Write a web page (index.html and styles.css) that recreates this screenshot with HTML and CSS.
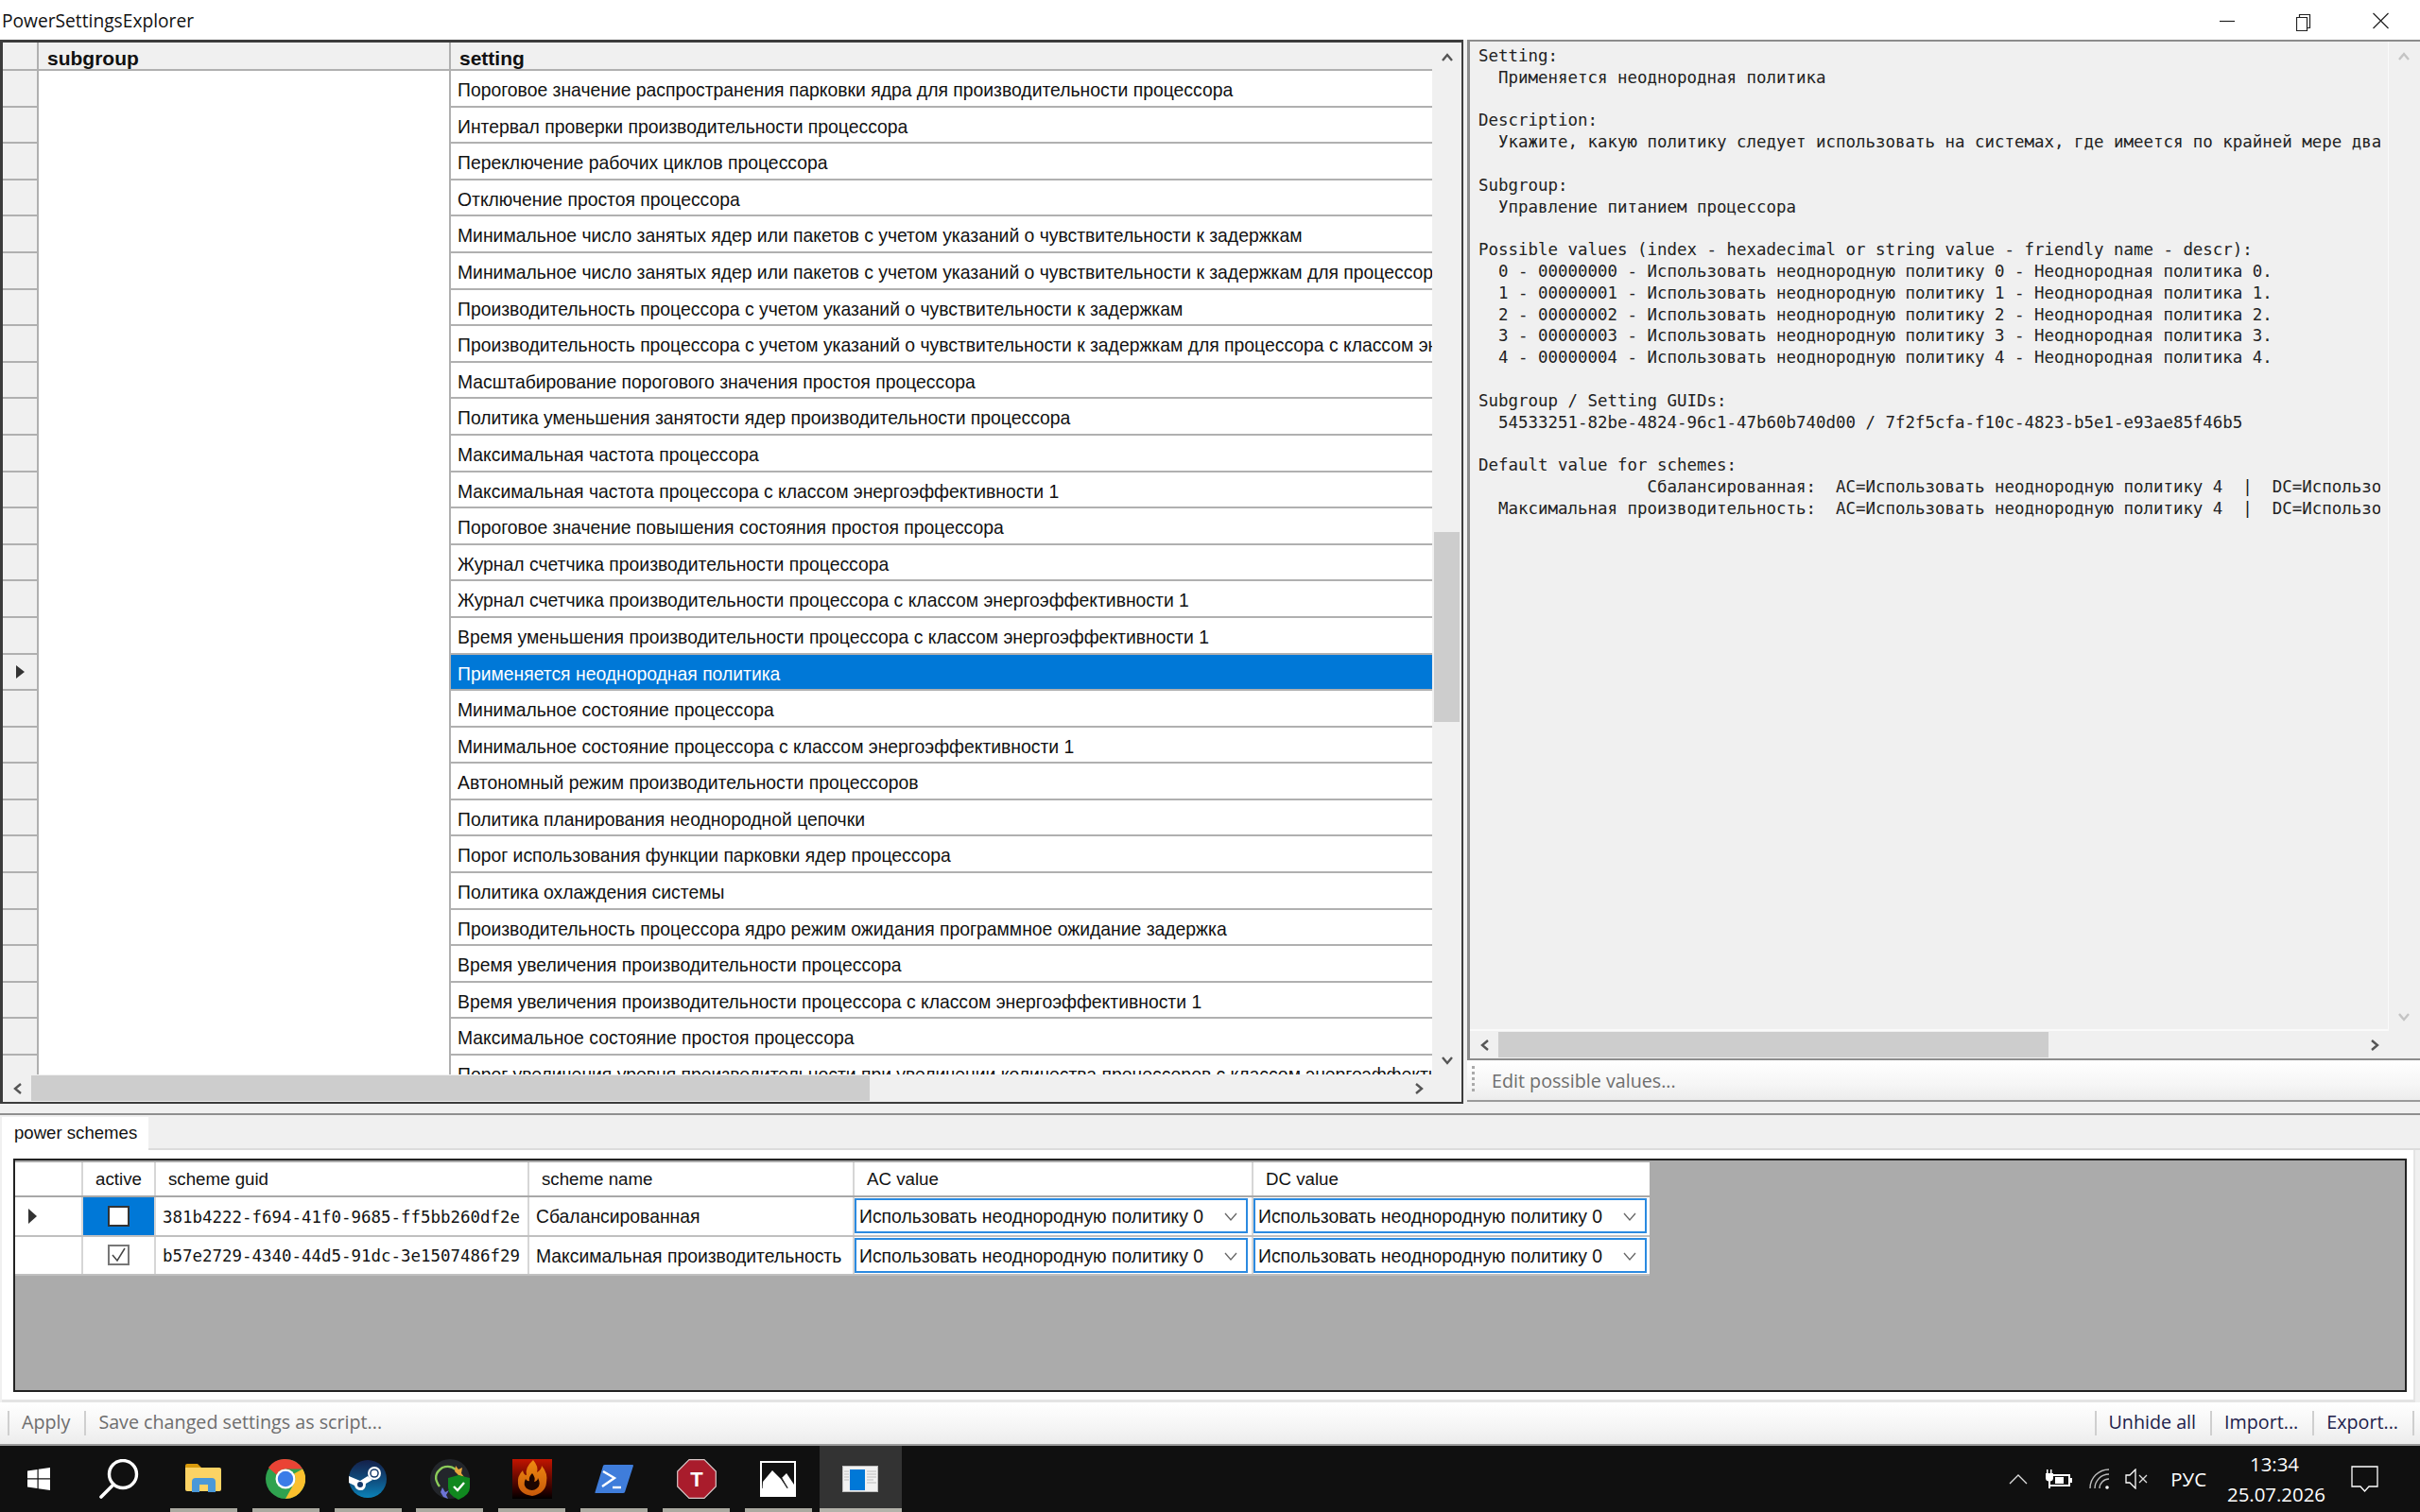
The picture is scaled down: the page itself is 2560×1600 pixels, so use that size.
FILE: index.html
```html
<!DOCTYPE html>
<html lang="en">
<head>
    <meta charset="UTF-8">
    <title>PowerSettingsExplorer</title>
    <link rel="stylesheet" href="styles.css">
</head>
<body>
    <header class="titlebar">
        <div class="app-title">PowerSettingsExplorer</div>
        <div class="window-controls">
            <svg class="win-btn" width="81" height="30" viewBox="0 0 81 30"><path d="M0 15.5H16"/></svg>
            <svg class="win-btn" width="81" height="30" viewBox="0 0 81 30"><path d="M0.5 11.5H11.5V25.5H0.5ZM3.5 11V8.5H14.5V22.5H12"/></svg>
            <svg class="win-btn" width="17" height="30" viewBox="0 0 17 30"><path d="M0.5 7 16.5 23M16.5 7 0.5 23"/></svg>
        </div>
    </header>

    <main class="top-panes">
        <section class="settings-grid">
            <div class="settings-body">
                <div class="settings-table">
                    <div class="row head-row">
                        <div class="row-head"></div>
                        <div class="cell-subgroup">subgroup</div>
                        <div class="cell-setting">setting</div>
                    </div>
                    <div class="row"><div class="row-head"></div><div class="cell-subgroup"></div><div class="cell-setting">Пороговое значение распространения парковки ядра для производительности процессора</div></div>
                    <div class="row"><div class="row-head"></div><div class="cell-subgroup"></div><div class="cell-setting">Интервал проверки производительности процессора</div></div>
                    <div class="row"><div class="row-head"></div><div class="cell-subgroup"></div><div class="cell-setting">Переключение рабочих циклов процессора</div></div>
                    <div class="row"><div class="row-head"></div><div class="cell-subgroup"></div><div class="cell-setting">Отключение простоя процессора</div></div>
                    <div class="row"><div class="row-head"></div><div class="cell-subgroup"></div><div class="cell-setting">Минимальное число занятых ядер или пакетов с учетом указаний о чувствительности к задержкам</div></div>
                    <div class="row"><div class="row-head"></div><div class="cell-subgroup"></div><div class="cell-setting">Минимальное число занятых ядер или пакетов с учетом указаний о чувствительности к задержкам для процессора с классом энергоэффективности 1</div></div>
                    <div class="row"><div class="row-head"></div><div class="cell-subgroup"></div><div class="cell-setting">Производительность процессора с учетом указаний о чувствительности к задержкам</div></div>
                    <div class="row"><div class="row-head"></div><div class="cell-subgroup"></div><div class="cell-setting">Производительность процессора с учетом указаний о чувствительности к задержкам для процессора с классом энергоэффективности 1</div></div>
                    <div class="row"><div class="row-head"></div><div class="cell-subgroup"></div><div class="cell-setting">Масштабирование порогового значения простоя процессора</div></div>
                    <div class="row"><div class="row-head"></div><div class="cell-subgroup"></div><div class="cell-setting">Политика уменьшения занятости ядер производительности процессора</div></div>
                    <div class="row"><div class="row-head"></div><div class="cell-subgroup"></div><div class="cell-setting">Максимальная частота процессора</div></div>
                    <div class="row"><div class="row-head"></div><div class="cell-subgroup"></div><div class="cell-setting">Максимальная частота процессора с классом энергоэффективности 1</div></div>
                    <div class="row"><div class="row-head"></div><div class="cell-subgroup"></div><div class="cell-setting">Пороговое значение повышения состояния простоя процессора</div></div>
                    <div class="row"><div class="row-head"></div><div class="cell-subgroup"></div><div class="cell-setting">Журнал счетчика производительности процессора</div></div>
                    <div class="row"><div class="row-head"></div><div class="cell-subgroup"></div><div class="cell-setting">Журнал счетчика производительности процессора с классом энергоэффективности 1</div></div>
                    <div class="row"><div class="row-head"></div><div class="cell-subgroup"></div><div class="cell-setting">Время уменьшения производительности процессора с классом энергоэффективности 1</div></div>
                    <div class="row selected"><div class="row-head"><svg width="9" height="14" viewBox="0 0 9 14"><path d="M0 0 9 7 0 14Z" fill="#333"/></svg></div><div class="cell-subgroup"></div><div class="cell-setting">Применяется неоднородная политика</div></div>
                    <div class="row"><div class="row-head"></div><div class="cell-subgroup"></div><div class="cell-setting">Минимальное состояние процессора</div></div>
                    <div class="row"><div class="row-head"></div><div class="cell-subgroup"></div><div class="cell-setting">Минимальное состояние процессора с классом энергоэффективности 1</div></div>
                    <div class="row"><div class="row-head"></div><div class="cell-subgroup"></div><div class="cell-setting">Автономный режим производительности процессоров</div></div>
                    <div class="row"><div class="row-head"></div><div class="cell-subgroup"></div><div class="cell-setting">Политика планирования неоднородной цепочки</div></div>
                    <div class="row"><div class="row-head"></div><div class="cell-subgroup"></div><div class="cell-setting">Порог использования функции парковки ядер процессора</div></div>
                    <div class="row"><div class="row-head"></div><div class="cell-subgroup"></div><div class="cell-setting">Политика охлаждения системы</div></div>
                    <div class="row"><div class="row-head"></div><div class="cell-subgroup"></div><div class="cell-setting">Производительность процессора ядро режим ожидания программное ожидание задержка</div></div>
                    <div class="row"><div class="row-head"></div><div class="cell-subgroup"></div><div class="cell-setting">Время увеличения производительности процессора</div></div>
                    <div class="row"><div class="row-head"></div><div class="cell-subgroup"></div><div class="cell-setting">Время увеличения производительности процессора с классом энергоэффективности 1</div></div>
                    <div class="row"><div class="row-head"></div><div class="cell-subgroup"></div><div class="cell-setting">Максимальное состояние простоя процессора</div></div>
                    <div class="row"><div class="row-head"></div><div class="cell-subgroup"></div><div class="cell-setting">Порог увеличения уровня производительности при увеличении количества процессоров с классом энергоэффективности 1</div></div>
                </div>
                <div class="vscroll">
                    <div class="scroll-btn"><svg class="chev" width="12" height="9" viewBox="0 0 12 9"><path d="M1 8 6 2 11 8"/></svg></div>
                    <div class="vthumb"></div>
                    <div class="scroll-fill"></div>
                    <div class="scroll-btn"><svg class="chev" width="12" height="9" viewBox="0 0 12 9"><path d="M1 1 6 7 11 1"/></svg></div>
                </div>
            </div>
            <div class="hscroll">
                <div class="scroll-btn"><svg class="chev" width="9" height="12" viewBox="0 0 9 12"><path d="M8 1 2 6 8 11"/></svg></div>
                <div class="hthumb left-thumb"></div>
                <div class="scroll-fill"></div>
                <div class="scroll-btn"><svg class="chev" width="9" height="12" viewBox="0 0 9 12"><path d="M1 1 7 6 1 11"/></svg></div>
            </div>
        </section>

        <section class="details">
            <div class="details-box">
                <div class="details-body">
                    <div class="details-pad">
<pre class="details-text">Setting:
  Применяется неоднородная политика

Description:
  Укажите, какую политику следует использовать на системах, где имеется по крайней мере два

Subgroup:
  Управление питанием процессора

Possible values (index - hexadecimal or string value - friendly name - descr):
  0 - 00000000 - Использовать неоднородную политику 0 - Неоднородная политика 0.
  1 - 00000001 - Использовать неоднородную политику 1 - Неоднородная политика 1.
  2 - 00000002 - Использовать неоднородную политику 2 - Неоднородная политика 2.
  3 - 00000003 - Использовать неоднородную политику 3 - Неоднородная политика 3.
  4 - 00000004 - Использовать неоднородную политику 4 - Неоднородная политика 4.

Subgroup / Setting GUIDs:
  54533251-82be-4824-96c1-47b60b740d00 / 7f2f5cfa-f10c-4823-b5e1-e93ae85f46b5

Default value for schemes:
                 Сбалансированная:  AC=Использовать неоднородную политику 4  |  DC=Использовать неоднородную политику 4
  Максимальная производительность:  AC=Использовать неоднородную политику 4  |  DC=Использовать неоднородную политику 4</pre>
                    </div>
                    <div class="vscroll faded">
                        <div class="scroll-btn"><svg class="chev" width="12" height="9" viewBox="0 0 12 9"><path d="M1 8 6 2 11 8"/></svg></div>
                        <div class="scroll-fill"></div>
                        <div class="scroll-btn"><svg class="chev" width="12" height="9" viewBox="0 0 12 9"><path d="M1 1 6 7 11 1"/></svg></div>
                    </div>
                </div>
                <div class="hscroll details-scroll">
                    <div class="scroll-btn"><svg class="chev" width="9" height="12" viewBox="0 0 9 12"><path d="M8 1 2 6 8 11"/></svg></div>
                    <div class="hthumb right-thumb"></div>
                    <div class="scroll-fill"></div>
                    <div class="scroll-btn"><svg class="chev" width="9" height="12" viewBox="0 0 9 12"><path d="M1 1 7 6 1 11"/></svg></div>
                </div>
            </div>
            <div class="edit-strip">
                <div class="grip"></div>
                <div class="strip-text disabled">Edit possible values...</div>
            </div>
        </section>
    </main>

    <div class="splitter"></div>

    <section class="schemes">
        <div class="tabs">
            <div class="tab">power schemes</div>
        </div>
        <div class="tab-page">
            <div class="schemes-grid">
                <div class="schemes-table">
                    <div class="s-row s-head">
                        <div class="s-rowhead"></div>
                        <div class="s-active">active</div>
                        <div class="s-guid head-pad">scheme guid</div>
                        <div class="s-name head-pad">scheme name</div>
                        <div class="s-value head-pad">AC value</div>
                        <div class="s-value head-pad">DC value</div>
                    </div>
                    <div class="s-row">
                        <div class="s-rowhead"><svg width="9" height="16" viewBox="0 0 9 16"><path d="M0 0 9 8 0 16Z" fill="#333"/></svg></div>
                        <div class="s-active current"><div class="check"></div></div>
                        <div class="s-guid">381b4222-f694-41f0-9685-ff5bb260df2e</div>
                        <div class="s-name">Сбалансированная</div>
                        <div class="s-value"><div class="combo"><span>Использовать неоднородную политику 0</span><svg width="14" height="9" viewBox="0 0 14 9"><path d="M1 1 7 8 13 1"/></svg></div></div>
                        <div class="s-value"><div class="combo"><span>Использовать неоднородную политику 0</span><svg width="14" height="9" viewBox="0 0 14 9"><path d="M1 1 7 8 13 1"/></svg></div></div>
                    </div>
                    <div class="s-row">
                        <div class="s-rowhead"></div>
                        <div class="s-active"><div class="check checked"><svg width="17" height="16" viewBox="0 0 17 16"><path d="M2 8 7 14 15 1"/></svg></div></div>
                        <div class="s-guid">b57e2729-4340-44d5-91dc-3e1507486f29</div>
                        <div class="s-name">Максимальная производительность</div>
                        <div class="s-value"><div class="combo"><span>Использовать неоднородную политику 0</span><svg width="14" height="9" viewBox="0 0 14 9"><path d="M1 1 7 8 13 1"/></svg></div></div>
                        <div class="s-value"><div class="combo"><span>Использовать неоднородную политику 0</span><svg width="14" height="9" viewBox="0 0 14 9"><path d="M1 1 7 8 13 1"/></svg></div></div>
                    </div>
                </div>
            </div>
        </div>
    </section>

    <div class="toolbar">
        <div class="tool disabled">Apply</div>
        <div class="tool disabled">Save changed settings as script...</div>
        <div class="tool-gap"></div>
        <div class="tool">Unhide all</div>
        <div class="tool">Import...</div>
        <div class="tool">Export...</div>
    </div>

    <footer class="taskbar">
        <div class="task-list">
            <div class="task">
                <svg width="24" height="24" viewBox="0 0 24 24"><path fill="#fff" d="M0 3.5 10.5 2V11.3H0ZM11.7 1.8 24 0V11.3H11.7ZM0 12.6H10.5V22L0 20.5ZM11.7 12.6H24V24L11.7 22.2Z"/></svg>
            </div>
            <div class="task">
                <svg class="search-icon" width="42" height="42" viewBox="0 0 42 42"><circle cx="25" cy="16" r="14.5" fill="none" stroke="#fff" stroke-width="3.4"/><path d="M15 27 2 40" fill="none" stroke="#fff" stroke-width="3.6" stroke-linecap="round"/></svg>
            </div>
            <div class="task open">
                <svg width="38" height="34" viewBox="0 0 38 34"><path fill="#d99a0c" d="M0 3Q0 1 2 1H13L17 5H35V12H0Z"/><path fill="#fcd364" d="M0 5H36Q38 5 38 7V28Q38 30 36 30H2Q0 30 0 28Z"/><path fill="#4a98d8" d="M7 31V20Q7 16 11 16H28Q32 16 32 20V31H24V23H15V31Z"/><path fill="#fcd364" d="M15 23H24V30H15Z"/></svg>
            </div>
            <div class="task open">
                <svg width="42" height="42" viewBox="0 0 42 42"><circle cx="21" cy="21" r="21" fill="#2fa24f"/><path fill="#ea4335" d="M21 0A21 21 0 0 1 39.2 10.5H21A10.500 10.500 0 0 0 11.500 16.500L3 9A21 21 0 0 1 21 0Z"/><path fill="#fbc02d" d="M39.200 10.500A21 21 0 0 1 21 42L30 26A10.500 10.500 0 0 0 30 15.500Z"/><circle cx="21" cy="21" r="10.500" fill="#fff"/><circle cx="21" cy="21" r="8.200" fill="#3b7de8"/></svg>
            </div>
            <div class="task open">
                <svg width="40" height="40" viewBox="0 0 40 40"><defs><linearGradient id="steamBg" x1="0" y1="0" x2="0" y2="1"><stop offset="0" stop-color="#14204a"/><stop offset="0.55" stop-color="#0f4f80"/><stop offset="1" stop-color="#0b82b8"/></linearGradient></defs><circle cx="20" cy="20" r="20" fill="url(#steamBg)"/><circle cx="27" cy="14" r="7" fill="#fff"/><circle cx="27" cy="14" r="4.800" fill="#15396a"/><circle cx="27" cy="14" r="3.300" fill="#fff"/><path fill="#fff" d="M0 17 12 22 20 17 25 21 18 25Q18 33 11 32Q7 31 6 27L0 24Z"/><circle cx="12" cy="26" r="3" fill="#15396a"/></svg>
            </div>
            <div class="task open">
                <svg width="44" height="44" viewBox="0 0 44 44"><circle cx="22" cy="22" r="21" fill="#23262b"/><path d="M11 30Q2 18 14 10Q22 7 28 12" fill="none" stroke="#8ccc5a" stroke-width="2.400"/><path d="M28 8 31 12 35 10 34 16 37 20 31 18 27 14Z" fill="#e7a63d"/><path d="M14 31 17 36 21 34 18 39 20 43 15 41 12 36Z" fill="#6d74d6"/><path fill="#10881f" d="M31 18 43 21V31Q43 39 31 44Q20 39 20 31V21Z"/><path d="M26 30 30 34 37 26" fill="none" stroke="#fff" stroke-width="2.400"/></svg>
            </div>
            <div class="task open">
                <svg width="42" height="42" viewBox="0 0 42 42"><defs><linearGradient id="flameBg" x1="0" y1="0" x2="0" y2="1"><stop offset="0" stop-color="#c21400"/><stop offset="0.85" stop-color="#200000"/><stop offset="1" stop-color="#000"/></linearGradient><linearGradient id="flameFill" x1="0" y1="0" x2="0" y2="1"><stop offset="0" stop-color="#ef8a10"/><stop offset="1" stop-color="#c8590a"/></linearGradient></defs><rect width="42" height="42" fill="url(#flameBg)"/><path fill="url(#flameFill)" d="M22 1Q28 8 26 14Q31 11 31 7Q38 15 36 25Q35 36 21 39Q7 37 6 26Q5 18 11 12Q12 17 15 17Q13 9 22 1Z"/><path fill="#1c0500" d="M21 15Q25 20 23 24Q27 23 27 20Q31 27 26 31Q21 35 15 31Q11 27 14 21Q16 24 18 23Q17 19 21 15Z"/></svg>
            </div>
            <div class="task open">
                <svg width="41" height="31" viewBox="0 0 41 31"><path fill="#3f7ddb" d="M9 1Q9.500 0 11 0H40Q41 0 41 1L32 29Q31.500 30 30 30H1Q0 30 0.500 29Z"/><path d="M9 7 21 14 8 23" fill="none" stroke="#fff" stroke-width="2.400"/><path d="M19 24H28" stroke="#fff" stroke-width="2.400"/></svg>
            </div>
            <div class="task open">
                <svg class="stop-sign" width="42" height="42" viewBox="0 0 42 42"><path d="M13 0.700H29L41.300 13V29L29 41.300H13L0.700 29V13Z" fill="#a91c2c" stroke="#d8c8c8" stroke-width="1.200"/><text x="21" y="29" text-anchor="middle">T</text></svg>
            </div>
            <div class="task open">
                <svg width="38" height="38" viewBox="0 0 38 38"><rect width="38" height="38" fill="#fff"/><rect x="2" y="2" width="34" height="27" fill="#111"/><path fill="#fff" d="M3 22 13 10 22 19 28 28 36 30V37H2Z"/><path fill="#fff" d="M23 18 28 13 36 25V30L30 29Z"/><path d="M23 18 29 29" stroke="#333" stroke-width="1"/></svg>
            </div>
            <div class="task current-app">
                <svg width="38" height="28" viewBox="0 0 38 28"><rect width="38" height="28" fill="#f2f2f2"/><rect x="0.500" y="0.500" width="37" height="27" fill="none" stroke="#bbb"/><rect x="8" y="4" width="16" height="22" fill="#0078d7"/><path d="M2 6H7M2 9H7M2 12H7M2 15H7M26 6H36M26 9H36M26 12H36M26 15H33M26 18H36" stroke="#bdbdbd"/></svg>
            </div>
        </div>
        <div class="tray">
            <svg class="tray-chevron" width="20" height="11" viewBox="0 0 20 11"><path d="M1 10 10 1 19 10"/></svg>
            <svg class="tray-icon" width="29" height="20" viewBox="0 0 29 20"><path fill="#fff" d="M2 0H3.500V4H6V0H7.500V4H9V9Q9 12 6 12.500V20H4V12.500Q1 12 1 9V4H2Z"/><path d="M8 6H26V17H6" fill="none" stroke="#fff" stroke-width="2"/><path fill="#fff" d="M11 8H20V15H11ZM27 9H29V14H27Z"/></svg>
            <svg class="tray-icon wifi" width="22" height="22" viewBox="0 0 22 22"><g fill="none" stroke="#bbb" stroke-width="1.400"><path d="M1 21A20 20 0 0 1 21 1"/><path d="M6 21A15 15 0 0 1 21 6"/><path d="M11 21A10 10 0 0 1 21 11"/></g><circle cx="19" cy="20" r="1.800" fill="#fff"/></svg>
            <svg class="tray-icon" width="24" height="22" viewBox="0 0 24 22"><path d="M1 7H5L11 1V21L5 15H1Z" fill="none" stroke="#fff" stroke-width="1.300"/><path d="M15 7 23 15M23 7 15 15" fill="none" stroke="#ddd" stroke-width="1.300"/></svg>
            <div class="lang">РУС</div>
            <div class="clock"><div>13:34</div><div>25.07.2026</div></div>
            <svg class="notify" width="29" height="28" viewBox="0 0 29 28"><path d="M1 1H28V22H19L14.500 27 10 22H1Z" fill="none" stroke="#fff" stroke-width="1.300"/></svg>
        </div>
    </footer>
</body>
</html>
```

FILE: styles.css
```css
:root {
    --ui-bg: #f0f0f0;
    --line: #b0b0b0;
    --dark-line: #3c3c3c;
    --select: #0078d7;
    --thumb: #cdcdcd;
    --grid-font: 'Liberation Sans', Arial, sans-serif;
    --mono-font: 'DejaVu Sans Mono', monospace;
    --ui-font: 'Open Sans', 'Noto Sans', sans-serif;
}

* {
    margin: 0;
    padding: 0;
    box-sizing: border-box;
}

body {
    width: 2560px;
    height: 1600px;
    overflow: hidden;
    display: flex;
    flex-direction: column;
    background: var(--ui-bg);
    color: #111;
    font-family: var(--grid-font);
    font-size: 19.35px;
}

/* Title bar */
.titlebar {
    height: 42px;
    flex: none;
    background: #fff;
    display: flex;
    align-items: center;
    justify-content: space-between;
    padding: 0 33px 0 2px;
}

.app-title {
    font-family: var(--ui-font);
    font-size: 19.2px;
    color: #111;
}

.window-controls {
    display: flex;
    margin-top: 2px;
}

.win-btn path {
    fill: none;
    stroke: #222;
    stroke-width: 1.2;
}

/* Top panes */
.top-panes {
    height: 1126px;
    flex: none;
    display: flex;
}

.settings-grid {
    width: 1548px;
    border: 3px solid var(--dark-line);
    border-width: 3px 2px 2px 3px;
    display: flex;
    flex-direction: column;
}

.settings-body {
    height: 1092px;
    flex: none;
    display: flex;
}

.settings-table {
    flex: 1;
    min-width: 0;
    overflow: hidden;
    background: #fff;
}

.row {
    height: 38.6px;
    display: flex;
}

.row-head {
    width: 38px;
    flex: none;
    background: var(--ui-bg);
    border-right: 2px solid var(--line);
    border-bottom: 2px solid var(--line);
    display: flex;
    align-items: center;
    justify-content: center;
}

.cell-subgroup {
    width: 436px;
    flex: none;
    border-right: 2px solid var(--line);
}

.cell-setting {
    flex: 1;
    min-width: 0;
    padding-left: 7px;
    border-bottom: 2px solid var(--line);
    white-space: nowrap;
    overflow: hidden;
    line-height: 40px;
}

.head-row {
    height: 30px;
    font-weight: bold;
    font-size: 21px;
    background: var(--ui-bg);
}

.head-row .cell-subgroup {
    padding-left: 9px;
    border-bottom: 2px solid var(--line);
    line-height: 33px;
}

.head-row .cell-setting {
    padding-left: 9px;
    line-height: 33px;
}

.selected .cell-setting {
    background: var(--select);
    color: #fff;
}

/* Scrollbars */
.vscroll {
    width: 31px;
    flex: none;
    display: flex;
    flex-direction: column;
    align-items: center;
    background: var(--ui-bg);
}

.scroll-btn {
    flex: none;
    width: 30px;
    height: 30px;
    display: flex;
    align-items: center;
    justify-content: center;
}

.chev path {
    fill: none;
    stroke: #555;
    stroke-width: 2.4;
}

.vthumb {
    width: 27px;
    height: 201px;
    margin-top: 488px;
    background: var(--thumb);
}

.scroll-fill {
    flex: 1;
}

.faded .chev path {
    stroke: #c4c4c4;
}

.hscroll {
    height: 29px;
    flex: none;
    display: flex;
    align-items: center;
    background: var(--ui-bg);
    padding-right: 30px;
}

.hthumb {
    height: 27px;
    background: var(--thumb);
}

.left-thumb {
    width: 887px;
}

/* Details pane */
.details {
    flex: 1;
    min-width: 0;
    margin-left: 4px;
    display: flex;
    flex-direction: column;
}

.details-box {
    height: 1080px;
    flex: none;
    border: 2px solid #8c8c8c;
    border-width: 2px 0 2px 3px;
    display: flex;
    flex-direction: column;
    padding-right: 2px;
}

.details-body {
    flex: 1;
    min-height: 0;
    display: flex;
}

.details-pad {
    flex: 1;
    min-width: 0;
    padding: 4px 8px 0 9px;
    border-right: 1px solid #fafafa;
    border-bottom: 2px solid #fafafa;
}

.details-text {
    height: 100%;
    overflow: hidden;
    font-family: var(--mono-font);
    font-size: 17.45px;
    line-height: 22.8px;
    color: #222;
}

.details-scroll {
    padding-right: 31px;
}

.right-thumb {
    width: 582px;
}

.edit-strip {
    height: 44px;
    flex: none;
    display: flex;
    align-items: center;
    padding-left: 5px;
    background: linear-gradient(#fff, #f6f6f6 60%, #ececec);
    border-bottom: 2px solid #9a9a9a;
}

.grip {
    width: 3px;
    height: 30px;
    background: repeating-linear-gradient(#aaa 0 3px, transparent 3px 6px);
}

.strip-text {
    margin-left: 18px;
}

.disabled {
    color: #6d6d6d;
}

.strip-text,
.tool {
    font-family: var(--ui-font);
    font-size: 19.7px;
}

.splitter {
    height: 12px;
    flex: none;
    border-bottom: 2px solid #8f8f8f;
}

/* Power schemes */
.schemes {
    height: 304px;
    flex: none;
    display: flex;
    flex-direction: column;
    padding-left: 2px;
}

.tabs {
    height: 37px;
    flex: none;
    border-bottom: 2px solid #dcdcdc;
    display: flex;
    align-items: flex-end;
}

.tab {
    width: 155px;
    height: 35px;
    margin-bottom: -2px;
    background: #fff;
    padding-left: 13px;
    font-size: 18.6px;
    line-height: 34px;
}

.tab-page {
    flex: 1;
    background: #fff;
    margin-right: 5px;
    padding: 9px 7px 8px 12px;
    border-bottom: 3px solid #e4e4e4;
    border-right: 2px solid #e4e4e4;
}

.schemes-grid {
    height: 100%;
    background: #ababab;
    border: 2px solid #222;
    padding: 2px 0 0 0;
}

.schemes-table {
    width: 1729px;
}

.s-row {
    height: 41.5px;
    display: flex;
    background: #fff;
    border-bottom: 2px solid #c0c0c0;
}

.s-row div:not(.s-rowhead):not(.check):not(.combo) {
    border-left: 2px solid #d6d6d6;
}

.s-head {
    height: 37px;
    border-bottom: 2px solid #a8a8a8;
}

.s-rowhead {
    width: 70px;
    flex: none;
    display: flex;
    align-items: center;
    padding-left: 14px;
}

.s-active {
    width: 77px;
    flex: none;
    display: flex;
    align-items: center;
    justify-content: center;
}

.s-guid {
    width: 395px;
    flex: none;
    padding: 2px 0 0 7px;
    display: flex;
    align-items: center;
    font-family: var(--mono-font);
    font-size: 17.45px;
    white-space: nowrap;
}

.s-name {
    width: 344px;
    flex: none;
    padding: 2px 0 0 7px;
    display: flex;
    align-items: center;
    white-space: nowrap;
    overflow: hidden;
}

.s-value {
    width: 422px;
    flex: none;
    display: flex;
    align-items: center;
    padding-right: 4px;
}

.s-head div {
    padding-top: 0;
    font-family: var(--grid-font);
    font-size: 18.7px;
}

.head-pad {
    padding-left: 13px;
}

.s-head .s-value {
    padding-left: 13px;
}

.current {
    background: var(--select);
}

.check {
    width: 23px;
    height: 22px;
    background: #fff;
    border: 2px solid #333;
}

.checked {
    border-color: #777;
    display: flex;
    align-items: center;
    justify-content: center;
}

.checked path {
    fill: none;
    stroke: #444;
    stroke-width: 1.5;
}

.combo {
    width: 100%;
    height: 37px;
    border: 2px solid #2b8ae0;
    display: flex;
    align-items: center;
    justify-content: space-between;
    padding: 2px 9px 0 3px;
    white-space: nowrap;
}

.combo path {
    fill: none;
    stroke: #666;
    stroke-width: 1.3;
}

/* Bottom toolbar */
.toolbar {
    height: 46px;
    flex: none;
    display: flex;
    align-items: center;
    padding-left: 8px;
    background: linear-gradient(#fff, #f5f5f5 60%, #ececec);
    border-bottom: 2px solid #999;
    color: #20204a;
}

.tool {
    height: 26px;
    line-height: 24px;
    padding: 0 15px 0 13px;
    border-left: 2px solid #cfcfcf;
    white-space: nowrap;
}

.tool-gap {
    flex: 1;
}

.tool:last-child {
    border-right: 2px solid #cfcfcf;
    margin-right: 6px;
}

/* Taskbar */
.taskbar {
    flex: 1;
    display: flex;
    justify-content: space-between;
    background: #101010;
}

.task-list {
    display: flex;
    margin-left: -2px;
}

.task {
    width: 86.9px;
    display: flex;
    align-items: center;
    justify-content: center;
}

.search-icon {
    margin-right: 4px;
}

.open {
    background: linear-gradient(#aaa9a0, #aaa9a0) center bottom / 71px 4px no-repeat;
}

.current-app {
    background: #333 linear-gradient(#b3b2aa, #b3b2aa) center bottom / 100% 4px no-repeat;
}

.stop-sign text {
    fill: #fff;
    font-family: var(--grid-font);
    font-weight: bold;
    font-size: 22px;
}

.tray {
    display: flex;
    align-items: center;
    padding-right: 44px;
    color: #fff;
    font-family: var(--ui-font);
    font-size: 20.4px;
}

.tray-chevron {
    margin-right: 18px;
}

.tray-chevron path {
    fill: none;
    stroke: #ddd;
    stroke-width: 1.3;
}

.tray-icon {
    margin-right: 18px;
}

.wifi {
    margin-right: 16px;
}

.lang {
    margin-left: 6px;
    margin-right: 22px;
}

.clock {
    width: 100px;
    text-align: center;
    line-height: 32px;
    margin-right: 31px;
}
```
